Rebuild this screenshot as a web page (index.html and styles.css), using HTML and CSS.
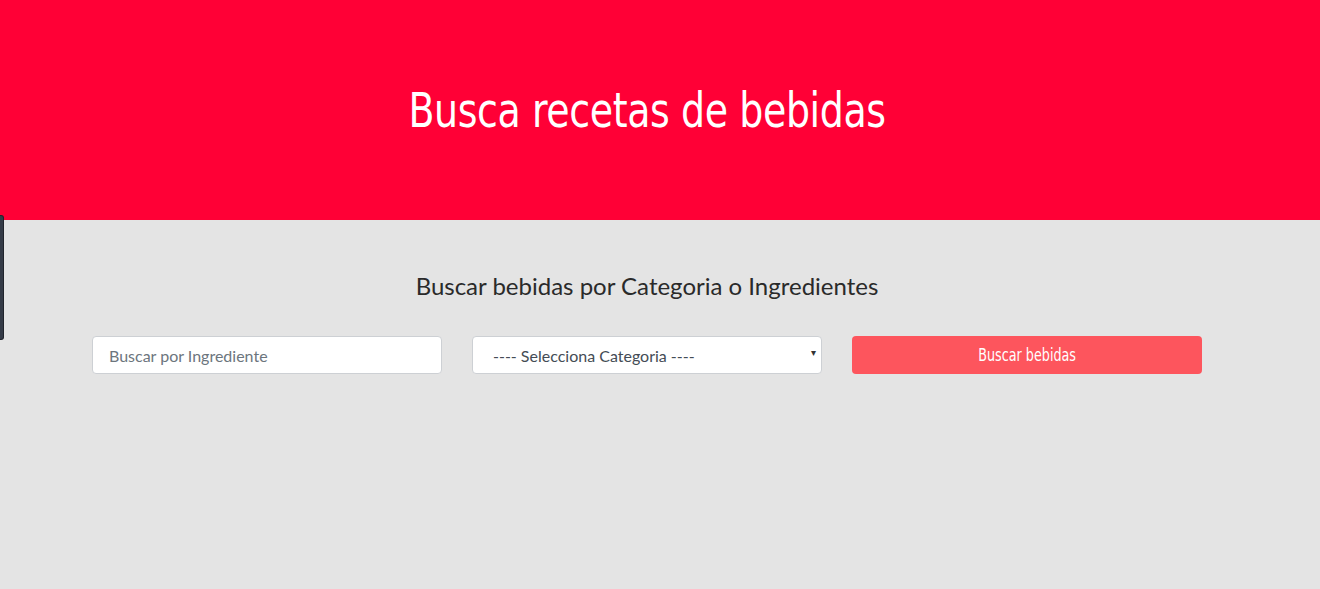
FILE: index.html
```html
<!DOCTYPE html>
<html lang="es">
<head>
<meta charset="utf-8">
<title>Busca recetas de bebidas</title>
<link rel="stylesheet" href="styles.css">
</head>
<body>
<header class="hero">
  <h1 class="hero-title">Busca recetas de bebidas</h1>
</header>
<div class="side-tab"></div>
<main class="content">
  <h2 class="subtitle">Buscar bebidas por Categoria o Ingredientes</h2>
  <form class="search-row">
    <input class="field" type="text" placeholder="Buscar por Ingrediente">
    <div class="select-wrap">
      <select class="field select">
        <option>---- Selecciona Categoria ----</option>
      </select>
      <span class="caret">&#9662;</span>
    </div>
    <button class="btn" type="button"><span class="btn-label">Buscar bebidas</span></button>
  </form>
</main>
</body>
</html>
```
FILE: styles.css
```css
* { box-sizing: border-box; }
html, body { margin: 0; padding: 0; }
body {
  background: #e4e4e4;
  font-family: Lato, "Open Sans", sans-serif;
  color: #2b2b2b;
  width: 1320px;
  height: 589px;
  overflow: hidden;
  position: relative;
}
.hero {
  background: #ff0036;
  height: 220px;
  display: flex;
  align-items: center;
  justify-content: center;
  padding-right: 26px;
}
.hero-title {
  margin: 0;
  color: #fff;
  font-family: "DejaVu Sans", sans-serif;
  font-weight: normal;
  font-size: 48px;
  letter-spacing: -0.5px;
  line-height: 1;
  padding-bottom: 0;
  transform: scaleX(0.79);
}
.side-tab {
  position: absolute;
  left: 0;
  top: 215px;
  width: 4px;
  height: 125px;
  background: #343b47;
  border: 1px solid #20242c;
  border-left: none;
  border-radius: 0 3px 3px 0;
}
.content {
  width: 1294px;
  display: flex;
  flex-direction: column;
  align-items: center;
  padding-top: 51px;
}
.subtitle {
  margin: 0;
  font-size: 24px;
  font-weight: normal;
  color: #2a2a2a;
  line-height: 30px;
}
.search-row {
  margin-top: 35px;
  display: flex;
  gap: 30px;
}
.field {
  width: 350px;
  height: 38px;
  background: #fff;
  border: 1px solid #cdd0d4;
  border-radius: 4px;
  font-family: Lato, sans-serif;
  font-size: 16px;
  color: #495057;
  padding: 0 16px;
  outline: none;
}
.field::placeholder { color: #6c757d; }
.select-wrap { position: relative; width: 350px; }
.select {
  -webkit-appearance: none;
  appearance: none;
  padding-left: 20px;
  color: #444c55;
}
.caret {
  position: absolute;
  right: 6px;
  top: 10px;
  font-size: 10px;
  color: #333;
  pointer-events: none;
}
.btn {
  width: 350px;
  height: 38px;
  background: #fd555d;
  border: none;
  border-radius: 4px;
  color: #fff;
  font-family: "DejaVu Sans", sans-serif;
  font-size: 17px;
  padding: 0;
}
.btn-label {
  display: inline-block;
  transform: scaleX(0.75);
}
```
